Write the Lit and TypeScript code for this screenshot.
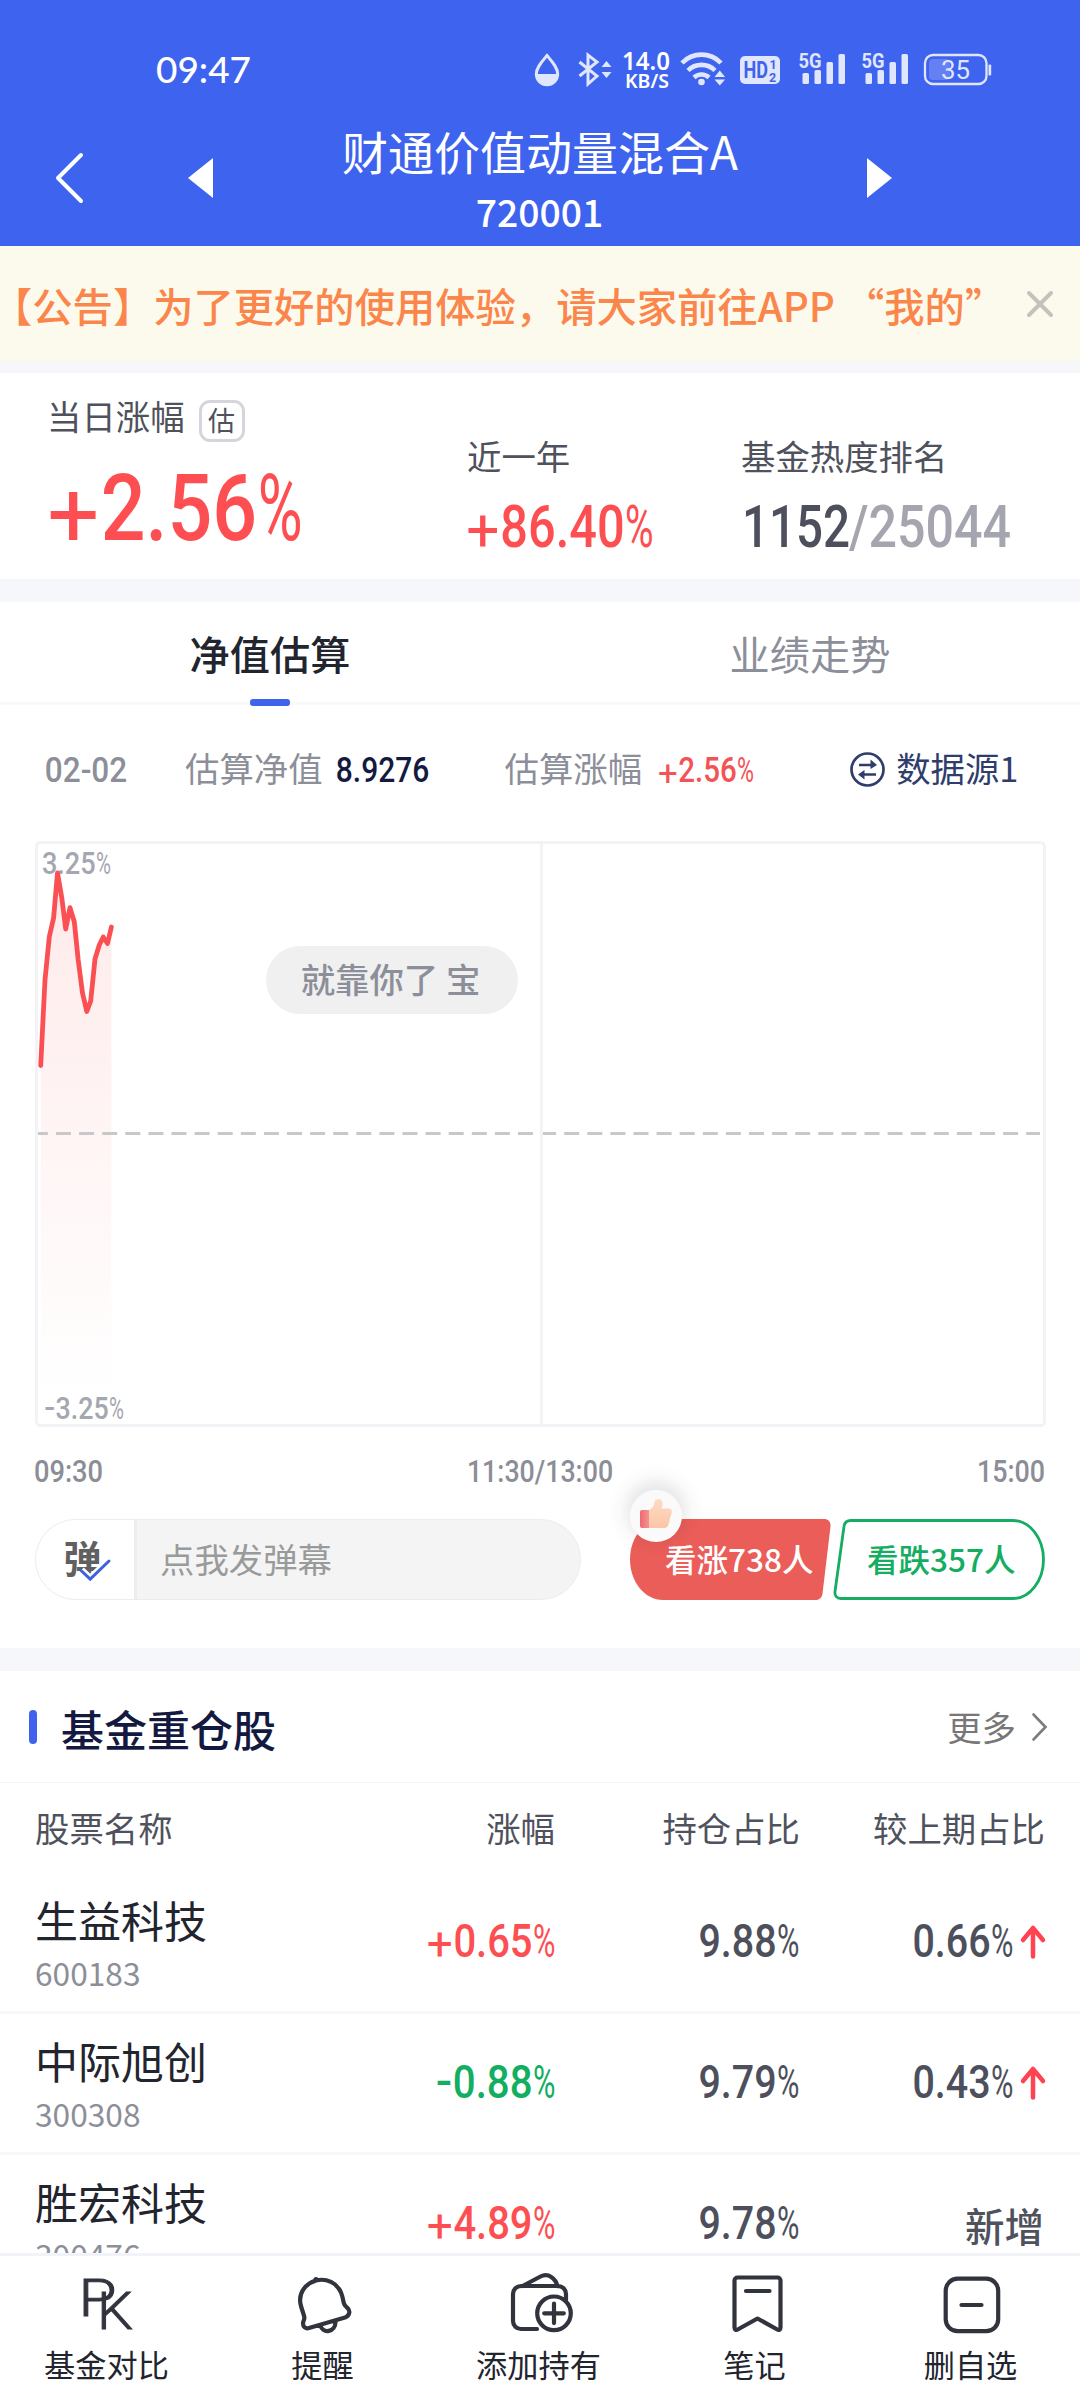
import { LitElement, html, svg, css } from "lit";
import { customElement, property } from "lit/decorators.js";

/**
 * Condensed numeral run, set to an exact width and cap height.
 * A leading sign and a trailing percent sign keep their own proportions; the digits fill the rest.
 */
@customElement("num-text")
class NumText extends LitElement {
  @property() text = "";
  @property({ type: Number }) w = 100;
  @property({ type: Number }) cap = 24;

  static styles = css`
    :host { display: inline-block; flex: none; line-height: 0; }
    .run { display: block; overflow: visible; }
    .glyphs { font-family: Roboto, "Liberation Sans", sans-serif; font-weight: 500; fill: currentColor; }
    .light { font-weight: 400; }
  `;

  render() {
    const { cap, w, text } = this;
    const size = cap / 0.711;
    const pad = size * 0.035;
    const sign = /^[+-]/.test(text) ? text[0] : "";
    const pct = text.endsWith("%") ? "%" : "";
    const digits = text.slice(sign.length, text.length - pct.length);
    const start = sign === "+" ? cap * 0.77 : sign === "-" ? cap * 0.48 : -pad;
    const end = pct ? w - cap * 0.65 : w + pad;
    const signPart = sign
      ? svg`<tspan class=${sign === "+" ? "light" : ""} x=${-cap * 0.04} y=${sign === "+" ? cap * 1.1 : cap * 0.96} textLength=${sign === "+" ? cap * 0.79 : cap * 0.5} lengthAdjust="spacingAndGlyphs">${sign}</tspan>`
      : "";
    const pctPart = pct
      ? svg`<tspan class="light" x=${w - cap * 0.64} y=${cap} textLength=${cap * 0.68} lengthAdjust="spacingAndGlyphs">${pct}</tspan>`
      : "";
    return html`<svg class="run" width=${w} height=${cap}>
      <text class="glyphs" font-size=${size}>${signPart}<tspan x=${start} y=${cap} textLength=${end - start} lengthAdjust="spacingAndGlyphs">${digits}</tspan>${pctPart}</text>
    </svg>`;
  }
}

@customElement("status-bar")
class StatusBar extends LitElement {
  static styles = css`
    :host { display: flex; justify-content: space-between; height: 92px; padding: 0 80px 0 157px; box-sizing: border-box; color: #fff; }
    .pic { display: block; overflow: visible; }
    .clock { font-family: Lato, "Noto Sans", sans-serif; font-weight: 500; font-size: 36px; fill: #fff; }
    .soft { fill: #e0e6fd; }
    .line { fill: none; stroke: #e0e6fd; stroke-width: 3; }
    .line.thin { stroke-width: 2.300; }
    .line.wide { stroke-width: 4.600; }
    .speed { font-family: "Noto Sans", sans-serif; font-weight: 600; fill: #fff; }
    .gen { font-family: Roboto, sans-serif; font-weight: 700; font-size: 20px; fill: #e0e6fd; }
    .hd { font-family: Roboto, sans-serif; font-weight: 700; fill: #3e63ef; }
    .pct { font-family: Roboto, sans-serif; font-size: 25px; fill: #e0e6fd; }
    .charge { fill: #6480f3; }
  `;

  signal(x: number) {
    return svg`<g>
      <text class="gen" x=${x} y="67.500" textLength="23" lengthAdjust="spacingAndGlyphs">5G</text>
      <rect class="soft" x=${x + 4} y="73" width="6.500" height="11" rx="1.500"/>
      <rect class="soft" x=${x + 16} y="70" width="6.500" height="14" rx="1.500"/>
      <rect class="soft" x=${x + 28} y="62" width="6.500" height="22" rx="1.500"/>
      <rect class="soft" x=${x + 40} y="54" width="6.500" height="30" rx="1.500"/>
    </g>`;
  }

  render() {
    return html`
      <svg class="pic" width="94" height="92"><text class="clock" x="-1" y="83" textLength="95" lengthAdjust="spacingAndGlyphs">09:47</text></svg>
      <svg class="pic" width="470" height="92" viewBox="530 0 470 92">
        <path class="line" d="M547 55.500c5 6 10.700 12 10.700 18.500a10.700 10.700 0 0 1-21.400 0c0-6.500 5.700-12.500 10.700-18.500z"/>
        <path class="soft" d="M536 74h22a11 11 0 0 1-22 0z"/>
        <path class="line" d="M579.500 62l17.500 14-9 8V55l9 7-17.500 14"/>
        <path class="soft" d="M601.500 67l5-6 5 6zM601.500 72l5 6 5-6z"/>
        <text class="speed" x="622" y="70" font-size="24.500" textLength="48" lengthAdjust="spacingAndGlyphs">14.0</text>
        <text class="speed" x="625" y="88" font-size="19.500" textLength="44" lengthAdjust="spacingAndGlyphs">KB/S</text>
        <path class="line wide" d="M682 63a27 27 0 0 1 39 0M688 70.500a19 19 0 0 1 27 0M694 77.500a11 11 0 0 1 15 0"/>
        <circle class="soft" cx="701.500" cy="82" r="3.300"/>
        <path class="soft" d="M714.500 77l5.300-6.500 5.300 6.500zM714.500 79.500l5.300 6 5.300-6z"/>
        <rect class="soft" x="740" y="56" width="40" height="28" rx="5"/>
        <text class="hd" x="743.500" y="78" font-size="23" textLength="24.500" lengthAdjust="spacingAndGlyphs">HD</text>
        <text class="hd" x="769.500" y="69" font-size="12.500">1</text>
        <text class="hd" x="769" y="82" font-size="12.500">2</text>
        ${this.signal(798.5)}
        ${this.signal(861.5)}
        <rect class="line thin" x="925" y="55" width="61.500" height="29" rx="8"/>
        <rect class="soft" x="988.500" y="64.500" width="2.700" height="11" rx="1"/>
        <rect class="charge" x="929" y="59" width="21" height="21" rx="4"/>
        <text class="pct" x="941" y="78.500" textLength="29" lengthAdjust="spacingAndGlyphs">35</text>
      </svg>`;
  }
}

interface Holding {
  name: string;
  code: string;
  change: string;
  changeWidth: number;
  share: string;
  diff?: string;
}

const HOLDINGS: Holding[] = [
  { name: "生益科技", code: "600183", change: "+0.65%", changeWidth: 126, share: "9.88%", diff: "0.66%" },
  { name: "中际旭创", code: "300308", change: "-0.88%", changeWidth: 117, share: "9.79%", diff: "0.43%" },
  { name: "胜宏科技", code: "300476", change: "+4.89%", changeWidth: 126, share: "9.78%" },
];

const CURVE: [number, number][] = [
  [40.7, 1065.5], [45, 980], [49.3, 936.7], [53.6, 918], [57.5, 873], [61.8, 898],
  [65.7, 929], [70, 907.7], [74.3, 921.7], [78.2, 960], [82.5, 993], [86.8, 1011.5],
  [90.7, 1001], [95, 959], [99.3, 945], [103.2, 937], [107.5, 943.5], [111.4, 927],
];

const NAV = [
  {
    label: "基金对比",
    icon: svg`<text class="pk" x="3.500" y="43.500" textLength="38" lengthAdjust="spacingAndGlyphs">P</text><text class="pk" x="22" y="56.500" textLength="36" lengthAdjust="spacingAndGlyphs">K</text>`,
  },
  {
    label: "提醒",
    icon: svg`<path class="ink" d="M25 8.500C13.500 12 7.500 21.500 9.500 32c1 5 3 9 3.800 13 .500 2.500-1.300 4-1.300 6.500 0 3.500 2.500 5.500 6 4.500l36-10.500c4.500-1.500 6-7 2-10-1.800-1.400-2.700-2-3.200-4.500-.800-4-1.300-7-2.800-10.500C46 11 35.500 5.800 25 8.500zM29.500 53.500c1.500 8.500 15.500 7.500 15-4.500"/><circle class="dot" cx="25" cy="7.500" r="2.600"/>`,
  },
  {
    label: "添加持有",
    icon: svg`<path class="ink" d="M30 57H14a8 8 0 0 1-8-8V22a8 8 0 0 1 8-8h37a8 8 0 0 1 8 8v6M15.500 14L33.500 4.500c8-4 15 2 17 9.500"/><circle class="ink" cx="47" cy="41.300" r="16.800"/><path class="ink" d="M47 31.500v19.600M37.200 41.300h19.600"/>`,
  },
  {
    label: "笔记",
    icon: svg`<path class="ink" d="M14.500 5.500h40a3 3 0 0 1 3 3v47c0 2-1.500 3-3.200 2L34.500 46.500 14.700 57.500c-1.700 1-3.200 0-3.200-2v-47a3 3 0 0 1 3-3zM23 19h23.500"/>`,
  },
  {
    label: "删自选",
    icon: svg`<rect class="ink" x="6.700" y="6.700" width="52.500" height="52.500" rx="12"/><path class="ink" d="M22.500 33h20"/>`,
  },
];

@customElement("app-root")
class AppRoot extends LitElement {
  static styles = css`
    :host {
      display: flex; flex-direction: column; width: 1080px; height: 2400px; overflow: hidden;
      background: #fff; color: #4f525d;
      font-family: "Noto Sans CJK SC", "Noto Sans", sans-serif; font-size: 34.400px;
    }
    svg { display: block; flex: none; overflow: visible; }
    .head { background: #3e63ef; height: 246px; flex: none; color: #fff; }
    .bar { display: flex; align-items: center; height: 154px; box-sizing: border-box; padding: 18px 188px 0 56px; }
    .prev { margin-left: 105px; }
    .fund { flex: 1; align-self: flex-start; text-align: center; padding-top: 10px; }
    .fund-name { font-size: 46px; line-height: 60px; }
    .fund-code { font-size: 37.300px; line-height: 62px; font-weight: 500; padding-right: 1px; }
    .main { flex: 1; min-height: 0; overflow: hidden; }
    .notice { display: flex; align-items: center; justify-content: space-between; height: 115px; background: #fcfaec; padding-right: 27px; }
    .notice-text { font-size: 40.300px; line-height: 60px; padding-top: 2px; font-weight: 500; color: #fb864c; white-space: nowrap; margin-left: -8px; }
    .band { height: 23px; background: #f6f7fb; }
    .band.thin { height: 12px; }
    .stats { display: grid; grid-template-columns: 419px 274px 1fr; height: 206px; padding-left: 48px; }
    .stat { padding-top: 61px; }
    .stat.first { padding-top: 21px; }
    .stat-label { display: flex; line-height: 42px; }
    .first .stat-label { margin-left: -1px; }
    .badge { box-sizing: border-box; width: 46px; height: 42px; margin: 6px 0 -6px 14px; border: 3px solid #d5d5db; border-radius: 11px; font-size: 27px; line-height: 34px; text-align: center; }
    .stat-value { display: flex; margin: 29px 0 0 1px; }
    .first .stat-value { margin: 38px 0 0 2px; }
    .stat .rank { margin-left: 3px; gap: 3px; }
    .red { color: #fd4f52; }
    .green { color: #12ae62; }
    .pale { color: #a5a5b0; }
    .dark { color: #4d505c; }
    .tabs { display: grid; grid-template-columns: 1fr 1fr; height: 100px; border-bottom: 3px solid #f9f9fa; }
    .tab { position: relative; text-align: center; font-size: 40.200px; line-height: 102px; color: #8c8f99; }
    .tab.on { font-weight: 500; color: #22242e; }
    .tab.on::after { content: ""; position: absolute; left: 250px; top: 97px; width: 40px; height: 7px; border-radius: 3px; background: #4063ec; }
    .info { display: flex; align-items: center; height: 128px; padding-left: 46px; margin-bottom: 8px; color: #8c8f99; }
    .lab { padding-bottom: 4px; line-height: 42px; }
    .l1 { margin-left: 59px; }
    .l2 { margin-left: 77px; }
    .v1 { margin-left: 14px; color: #14193f; }
    .v2 { margin-left: 17px; color: #f25356; }
    .swap { margin-left: 97px; }
    .source { margin-left: 11px; color: #2f3d6c; }
    .chart { position: relative; width: 1011px; height: 586px; margin-left: 35px; }
    .frame { fill: none; stroke: #f2f2f7; stroke-width: 3; }
    .zero { stroke: #c8c8cb; stroke-width: 3; stroke-dasharray: 15 8.100; }
    .curve { fill: none; stroke: #fb5053; stroke-width: 4.800; stroke-linecap: round; stroke-linejoin: round; }
    .bubble { position: absolute; left: 231px; top: 105px; box-sizing: border-box; width: 252px; height: 68px; padding-right: 3px; border-radius: 34px; background: #f0f0f0; color: #8c8f99; font-weight: 500; text-align: center; line-height: 65px; }
    .top, .bottom { position: absolute; left: 8px; top: 11px; line-height: 0; color: #a5a7b0; }
    .bottom { left: 10px; top: 556px; }
    .over { position: absolute; left: 0; top: 0; }
    .axis { display: flex; justify-content: space-between; padding: 33px 36px 0 35px; color: #8b8d97; }
    .actions { display: flex; padding: 37px 0 48px 35px; }
    .danmu { box-sizing: border-box; display: flex; width: 546px; height: 81px; border: 1.500px solid #ececec; border-radius: 41px; overflow: hidden; background: #f4f4f4; }
    .danmu-icon { width: 98px; background: #fff; border-right: 3px solid #ededed; }
    .dan { font-size: 38px; font-weight: 700; fill: #606060; }
    .danmu-hint { padding-left: 23px; line-height: 77px; color: #999b9b; }
    .votes { margin-left: 49px; }
    .vote { font-size: 31.500px; font-weight: 500; }
    .sec { display: flex; align-items: center; height: 111px; border-bottom: 1px solid #f4f4f5; padding: 0 33px 0 29px; }
    .mark { width: 8px; height: 34px; border-radius: 4px; background: #4063ee; }
    .sec-title { flex: 1; margin-left: 24px; padding-top: 2px; font-size: 43px; line-height: 60px; font-weight: 500; color: #14193f; }
    .more { padding-bottom: 2px; color: #777; }
    .chev { margin-left: 16px; }
    .row, .cols { display: grid; grid-template-columns: 520px 245px 245px; padding-left: 35px; }
    .cols { height: 90px; line-height: 88px; text-align: right; }
    .left { display: flex; justify-content: space-between; }
    .row { height: 138px; border-bottom: 3px solid #f8f8f9; }
    .stock { padding-top: 21px; }
    .stock-name { font-size: 43px; line-height: 50px; color: #22242e; }
    .stock-code { margin-top: 6px; font-size: 31.700px; line-height: 44px; color: #8c8f99; }
    .val { display: flex; justify-content: flex-end; padding-top: 51px; color: #4d505c; }
    .val.share { padding-right: 2px; }
    .up { margin: 1px 0 0 9px; }
    .fresh { padding: 40px 1px 0 0; font-size: 39.500px; line-height: 60px; font-weight: 500; text-align: right; }
    .change { padding: 51px 1px 0 0; }
    .nav { display: grid; grid-template-columns: repeat(5, 216px); height: 144px; flex: none; border-top: 3px solid #f2f2f9; background: #fff; }
    .item { display: flex; flex-direction: column; align-items: center; padding: 16px 3px 0 0; }
    .item-label { margin-top: 8px; font-size: 31.200px; line-height: 40px; color: #22242e; }
    .ink { fill: none; stroke: #31333d; stroke-width: 4.200; stroke-linecap: round; stroke-linejoin: round; }
    .dot { fill: #31333d; }
    .pk { font-family: Roboto, sans-serif; font-weight: 300; font-size: 52px; fill: #31333d; stroke: #31333d; stroke-width: 0.900; }
  `;

  private chart() {
    const line = CURVE.map(([x, y]) => `${x},${y}`).join(" ");
    return html`<div class="chart">
      <svg width="1011" height="586" viewBox="35 841 1011 586">
        <defs><linearGradient id="fade" x1="0" y1="873" x2="0" y2="1400" gradientUnits="userSpaceOnUse">
          <stop offset="0" stop-color="#ff5053" stop-opacity="0.120"/><stop offset="1" stop-color="#ff5053" stop-opacity="0"/>
        </linearGradient></defs>
        <polygon fill="url(#fade)" points="41,1400 ${line} 111.4,1400"/>
        <path class="zero" d="M37.500 1133.500H1040" stroke-dashoffset="4.600"/>
        <rect class="frame" x="36.500" y="842.500" width="1008" height="583" rx="4"/>
        <path class="frame" d="M541.500 843V1425"/>
      </svg>
      <div class="top"><num-text text="3.25%" w="67" cap="22"></num-text></div>
      <div class="bottom"><num-text text="-3.25%" w="78" cap="22"></num-text></div>
      <svg class="over" width="1011" height="586" viewBox="35 841 1011 586"><polyline class="curve" points=${line}/></svg>
      <div class="bubble">就靠你了 宝</div>
    </div>`;
  }

  private votes() {
    return html`<svg class="votes" width="415" height="81" viewBox="630 1519 415 81">
      <defs>
        <linearGradient id="hand" x1="0" y1="0" x2="0" y2="1"><stop offset="0" stop-color="#fddcc4"/><stop offset="1" stop-color="#fdc5a6"/></linearGradient>
        <linearGradient id="cuff"><stop offset="0" stop-color="#ee6a70"/><stop offset="1" stop-color="#f79a98"/></linearGradient>
        <radialGradient id="halo"><stop offset="0.500" stop-color="#000" stop-opacity="0.075"/><stop offset="0.750" stop-color="#000" stop-opacity="0.020"/><stop offset="1" stop-color="#000" stop-opacity="0"/></radialGradient>
      </defs>
      <path fill="#eb5d59" d="M663 1519H824c4.500 0 7 3 6.500 7.500l-8 67c-.500 4-3 6.500-7 6.500H663c-18 0-33-18-33-40.500s15-41 33-41z"/>
      <path fill="#fff" stroke="#14ad62" stroke-width="2.800" d="M851 1520.500h162c17 0 30.500 18 30.500 39s-13.500 39-30.500 39H841c-4.500 0-6.500-3-6-7l9-65c.500-4.500 3-6 7-6z"/>
      <circle cx="656" cy="1511" r="48" fill="url(#halo)"/>
      <circle cx="656" cy="1516" r="26" fill="#fafafa"/>
      <rect x="640" y="1510" width="11" height="18" rx="2" fill="url(#cuff)"/>
      <path fill="url(#hand)" d="M649 1510c4-2 5-5 5.500-8 .500-4 7.500-4.500 8 .500.200 2.500-.500 4.500-1 6h7c2.500 0 3.700 1.800 3.200 4l-3.200 12c-.700 2.300-2 3.500-4 3.500H649z"/>
      <text class="vote" fill="#fff" x="665" y="1571.500" textLength="148.500">看涨738人</text>
      <text class="vote" fill="#14ad62" x="867" y="1571.500" textLength="148.500">看跌357人</text>
    </svg>`;
  }

  private row(h: Holding) {
    const tone = h.change.startsWith("+") ? "red" : "green";
    return html`<div class="row">
      <div class="left">
        <div class="stock"><div class="stock-name">${h.name}</div><div class="stock-code">${h.code}</div></div>
        <num-text class="change ${tone}" text=${h.change} w=${h.changeWidth} cap="33"></num-text>
      </div>
      <div class="val share"><num-text text=${h.share} w="98" cap="33"></num-text></div>
      ${h.diff
        ? html`<div class="val"><num-text text=${h.diff} w="98" cap="33"></num-text>
            <svg class="up" width="24" height="34"><path d="M12 31.500V3M2 15L12 3l10 12" fill="none" stroke="#ff4350" stroke-width="4.500" stroke-linecap="round" stroke-linejoin="round"/></svg></div>`
        : html`<div class="fresh">新增</div>`}
    </div>`;
  }

  render() {
    return html`
      <div class="head">
        <status-bar></status-bar>
        <div class="bar">
          <svg width="27" height="50"><path d="M25 2L2 25l23 23" fill="none" stroke="#fff" stroke-width="4" stroke-linecap="round" stroke-linejoin="round"/></svg>
          <svg class="prev" width="25" height="40"><path d="M25 0v40L0 20z" fill="#fff"/></svg>
          <div class="fund"><div class="fund-name">财通价值动量混合A</div><div class="fund-code">720001</div></div>
          <svg width="25" height="40"><path d="M0 0v40L25 20z" fill="#fff"/></svg>
        </div>
      </div>
      <div class="main">
        <div class="notice">
          <div class="notice-text">【公告】为了更好的使用体验，请大家前往APP “我的”</div>
          <svg width="26" height="26"><path d="M2 2l22 22M24 2L2 24" stroke="#c3c2bf" stroke-width="4" stroke-linecap="round"/></svg>
        </div>
        <div class="band thin"></div>
        <div class="stats">
          <div class="stat first">
            <div class="stat-label">当日涨幅<span class="badge">估</span></div>
            <div class="stat-value red"><num-text text="+2.56%" w="250" cap="66"></num-text></div>
          </div>
          <div class="stat">
            <div class="stat-label">近一年</div>
            <div class="stat-value red"><num-text text="+86.40%" w="184" cap="42"></num-text></div>
          </div>
          <div class="stat">
            <div class="stat-label">基金热度排名</div>
            <div class="stat-value rank">
              <num-text class="dark" text="1152" w="104" cap="42"></num-text>
              <num-text class="pale" text="/25044" w="158" cap="42"></num-text>
            </div>
          </div>
        </div>
        <div class="band"></div>
        <div class="tabs"><div class="tab on">净值估算</div><div class="tab">业绩走势</div></div>
        <div class="info">
          <num-text text="02-02" w="80" cap="25"></num-text>
          <span class="lab l1">估算净值</span><num-text class="v1" text="8.9276" w="91" cap="25"></num-text>
          <span class="lab l2">估算涨幅</span><num-text class="v2" text="+2.56%" w="94" cap="25"></num-text>
          <svg class="swap" width="35" height="35"><g fill="none" stroke="#2f3d6c" stroke-width="2.700"><circle cx="17.500" cy="17.500" r="16"/><path d="M9 13h14M26 22.500H12"/></g><path d="M20.500 7.500l6.500 5.500-6.500 4zM14.500 18l-6.500 4.500 6.500 5z" fill="#2f3d6c"/></svg>
          <span class="lab source">数据源1</span>
        </div>
        ${this.chart()}
        <div class="axis">
          <num-text text="09:30" w="67" cap="22"></num-text>
          <num-text text="11:30/13:00" w="144" cap="22"></num-text>
          <num-text text="15:00" w="66" cap="22"></num-text>
        </div>
        <div class="actions">
          <div class="danmu">
            <div class="danmu-icon"><svg width="98" height="78"><text class="dan" x="27.500" y="53">弹</text>
              <path d="M45 50.500l9.200 8.700L73 41" fill="none" stroke="#fff" stroke-width="8"/>
              <path d="M45 50.500l9.200 8.700L73 41" fill="none" stroke="#3f62dc" stroke-width="3" stroke-linecap="round"/></svg></div>
            <div class="danmu-hint">点我发弹幕</div>
          </div>
          ${this.votes()}
        </div>
        <div class="band"></div>
        <div class="sec">
          <div class="mark"></div><div class="sec-title">基金重仓股</div><div class="more">更多</div>
          <svg class="chev" width="15" height="28"><path d="M1.500 1.500L13.500 14 1.500 26.500" fill="none" stroke="#7c7c7c" stroke-width="2.600" stroke-linecap="round"/></svg>
        </div>
        <div class="cols"><div class="left">股票名称<span>涨幅</span></div><div>持仓占比</div><div>较上期占比</div></div>
        ${HOLDINGS.map((h) => this.row(h))}
      </div>
      <div class="nav">
        ${NAV.map((n) => html`<div class="item"><svg width="64" height="64">${n.icon}</svg><div class="item-label">${n.label}</div></div>`)}
      </div>`;
  }
}
